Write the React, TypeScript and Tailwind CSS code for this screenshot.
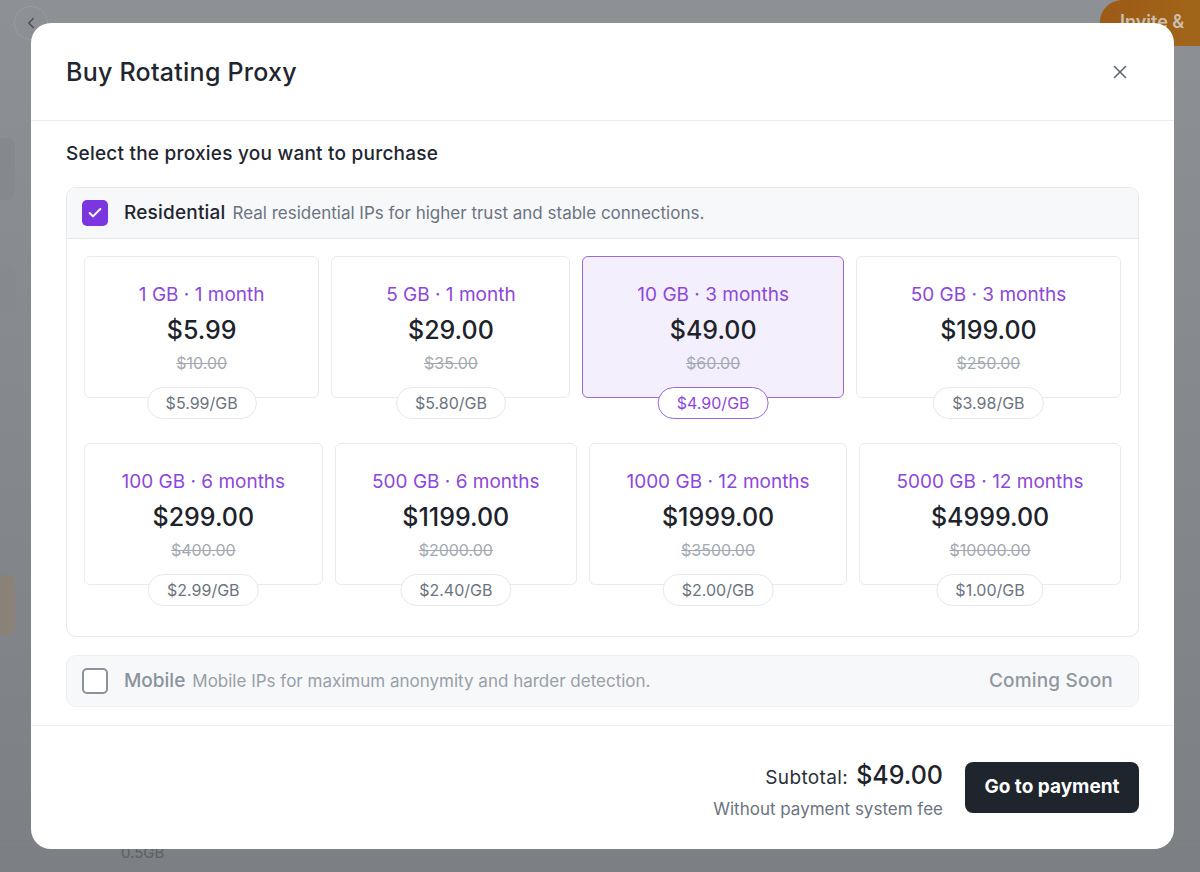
import { X, Check, ChevronLeft } from "lucide-react";

type Plan = { label: string; price: string; old: string; perGb: string; selected?: boolean };

const ROW1: Plan[] = [
  { label: "1 GB · 1 month", price: "$5.99", old: "$10.00", perGb: "$5.99/GB" },
  { label: "5 GB · 1 month", price: "$29.00", old: "$35.00", perGb: "$5.80/GB" },
  { label: "10 GB · 3 months", price: "$49.00", old: "$60.00", perGb: "$4.90/GB", selected: true },
  { label: "50 GB · 3 months", price: "$199.00", old: "$250.00", perGb: "$3.98/GB" },
];

const ROW2: Plan[] = [
  { label: "100 GB · 6 months", price: "$299.00", old: "$400.00", perGb: "$2.99/GB" },
  { label: "500 GB · 6 months", price: "$1199.00", old: "$2000.00", perGb: "$2.40/GB" },
  { label: "1000 GB · 12 months", price: "$1999.00", old: "$3500.00", perGb: "$2.00/GB" },
  { label: "5000 GB · 12 months", price: "$4999.00", old: "$10000.00", perGb: "$1.00/GB" },
];

function PlanCard({ plan }: { plan: Plan }) {
  return (
    <div
      className={
        plan.selected
          ? "relative flex-auto h-[142px] rounded-md border border-[#9a68de] bg-[#f4effd] flex flex-col items-center pt-[25px]"
          : "relative flex-auto h-[142px] rounded-md border border-[#e8eaed] bg-white flex flex-col items-center pt-[25px]"
      }
    >
      <div className="text-[19px] leading-[26px] text-[#8d47dc] whitespace-nowrap px-8">{plan.label}</div>
      <div className="mt-[6px] text-[25px] leading-[32px] font-medium text-[#1d232b]">{plan.price}</div>
      <div className="mt-[7px] text-[16px] leading-[20px] text-[#a3a9b1] line-through">{plan.old}</div>
      <div
        className={
          plan.selected
            ? "absolute left-1/2 -translate-x-1/2 bottom-[-22px] h-[32px] px-[18px] rounded-full border border-[#9a68de] bg-white text-[16px] leading-[30px] text-[#8d47dc] whitespace-nowrap"
            : "absolute left-1/2 -translate-x-1/2 bottom-[-22px] h-[32px] px-[18px] rounded-full border border-[#e6e8eb] bg-white text-[16px] leading-[30px] text-[#6b7480] whitespace-nowrap"
        }
      >
        {plan.perGb}
      </div>
    </div>
  );
}

export default function App() {
  return (
    <div className="relative w-[1200px] h-[872px] overflow-hidden bg-gradient-to-b from-[#8d9094] to-[#7c7f83] font-['Inter',sans-serif]">
      {/* page behind the overlay */}
      <div className="absolute left-[14px] top-[6px] w-[34px] h-[34px] rounded-full border border-[#989b9f] flex items-center justify-center text-[#4b4f55]">
        <ChevronLeft size={18} strokeWidth={2} />
      </div>
      <div className="absolute left-[1100px] top-0 w-[140px] h-[46px] rounded-[22px] bg-gradient-to-r from-[#9c5a16] to-[#a36a1c] px-5 pt-[8px] text-[18px] font-semibold text-[#cdbfae]">
        Invite &amp;
      </div>
      <div className="absolute left-0 top-[138px] w-[15px] h-[62px] rounded-r-lg bg-[#85888c]" />
      <div className="absolute left-0 top-[265px] w-[15px] h-[48px] rounded-r-lg bg-[#86898d]" />
      <div className="absolute left-0 top-[575px] w-[15px] h-[60px] rounded-r-lg bg-[#8a8276]" />
      <div className="absolute left-[121px] top-[842px] text-[15px] text-[#5d6066]">0.5GB</div>

      {/* modal */}
      <div className="absolute left-[31px] top-[23px] w-[1143px] h-[826px] rounded-[20px] bg-white flex flex-col overflow-hidden">
        <div className="h-[98px] border-b border-[#e9ebee] px-[35px] flex items-center justify-between">
          <div className="text-[25px] leading-[32px] font-medium tracking-[0.01em] text-[#1f2630] pt-[1px]">Buy Rotating Proxy</div>
          <X size={22} strokeWidth={1.75} className="text-[#5f6872] mr-[8px]" />
        </div>

        <div className="px-[35px] pt-[19px] pb-[18px] border-b border-[#eef0f2]">
          <div className="text-[19px] leading-[28px] font-medium tracking-[0.012em] text-[#1f2630]">Select the proxies you want to purchase</div>

          <div className="mt-[19px] rounded-[10px] border border-[#e6e8eb] overflow-hidden">
            <div className="h-[51px] bg-[#f7f8fa] border-b border-[#e6e8eb] px-[15px] flex items-center">
              <div className="w-[26px] h-[26px] rounded-[5px] bg-[#7b36e0] flex items-center justify-center text-white">
                <Check size={16} strokeWidth={3} />
              </div>
              <div className="ml-4 text-[19px] font-medium tracking-[0.01em] text-[#1f2630]">Residential</div>
              <div className="ml-[7px] text-[17px] text-[#6b7480] pt-[1px]">Real residential IPs for higher trust and stable connections.</div>
            </div>
            <div className="px-[17px] pt-[17px] pb-[51px] flex flex-col gap-[45px]">
              <div className="flex gap-3">
                {ROW1.map((p) => (
                  <PlanCard key={p.label} plan={p} />
                ))}
              </div>
              <div className="flex gap-3">
                {ROW2.map((p) => (
                  <PlanCard key={p.label} plan={p} />
                ))}
              </div>
            </div>
          </div>

          <div className="mt-[18px] h-[52px] rounded-[10px] border border-[#eceef0] bg-[#f7f8fa] px-[15px] flex items-center">
            <div className="w-[26px] h-[26px] rounded-[5px] border-2 border-[#8a939d] bg-white" />
            <div className="ml-4 text-[19px] font-medium text-[#8a939d]">Mobile</div>
            <div className="ml-[7px] text-[17px] text-[#98a0a8] pt-[1px]">Mobile IPs for maximum anonymity and harder detection.</div>
            <div className="ml-auto mr-[10px] text-[19px] font-medium tracking-[0.01em] text-[#8f979f]">Coming Soon</div>
          </div>
        </div>

        <div className="flex-1 px-[35px] flex items-center justify-end gap-[22px]">
          <div className="flex flex-col items-end pt-[4px]">
            <div className="flex items-baseline gap-2">
              <span className="text-[19px] tracking-[0.02em] text-[#2a3038]">Subtotal:</span>
              <span className="text-[25px] font-medium text-[#1d232b]">$49.00</span>
            </div>
            <div className="text-[17px] text-[#6b7480] mt-[3px]">Without payment system fee</div>
          </div>
          <button className="h-[51px] w-[174px] rounded-lg bg-[#1e252d] text-white text-[19px] font-bold">
            Go to payment
          </button>
        </div>
      </div>
    </div>
  );
}
